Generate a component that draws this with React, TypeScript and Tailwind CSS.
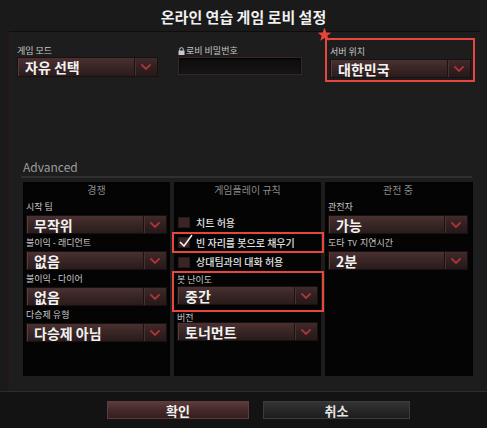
import type { ReactNode } from "react";

const FONT = '"Noto Sans CJK KR", "Noto Sans", "Liberation Sans", sans-serif';

function Chevron() {
  return (
    <svg width="10" height="6" viewBox="0 0 10 6" fill="none">
      <path d="M1 1l4 4 4-4" stroke="#a9343a" strokeWidth="1.8" strokeLinecap="round" />
    </svg>
  );
}

function Select({ value, h = "h-[19px]" }: { value: string; h?: string }) {
  return (
    <div
      className={`flex ${h} w-full items-stretch border border-[#1a1010] bg-[linear-gradient(to_bottom,#4a3131,#3a2626_45%,#2a1c1c)] shadow-[inset_1px_0_0_#5a3c3c]`}
    >
      <span className="flex flex-1 items-center truncate pl-[7px] text-[14px] font-bold leading-none text-[#f2f2f2]">
        {value}
      </span>
      <span className="flex w-[23px] items-center justify-center border-l border-[#1d1212] bg-[linear-gradient(to_bottom,#402a2a,#322020_50%,#261919)] shadow-[inset_1px_0_0_#4b3232]">
        <Chevron />
      </span>
    </div>
  );
}

function Label({ children, className = "h-[17px]" }: { children: ReactNode; className?: string }) {
  return (
    <div className={`flex items-center text-[9px] leading-none text-[#c8c8c8] ${className}`}>{children}</div>
  );
}

function Check({ label, checked }: { label: string; checked?: boolean }) {
  return (
    <div className="flex h-full items-center gap-[6px] pl-[4px]">
      <span className="relative h-[11px] w-[12px] border border-[#2a1818] bg-[#3a2424]">
        {checked && (
          <svg className="absolute -left-[1px] -top-[5px]" width="16" height="16" viewBox="0 0 16 16" fill="none">
            <path d="M2 9l4 4L14 2" stroke="#f2f2f2" strokeWidth="1.6" />
          </svg>
        )}
      </span>
      <span className="text-[10px] font-medium leading-none text-[#e0e0e0]">{label}</span>
    </div>
  );
}

function ColumnHeader({ children }: { children: ReactNode }) {
  return (
    <div className="flex h-[16px] items-center justify-center text-[10px] leading-none text-[#8a8a8a]">{children}</div>
  );
}

export default function App() {
  return (
    <div
      className="flex h-[428px] w-[487px] flex-col overflow-hidden bg-[#1a1a1a]"
      style={{ fontFamily: FONT }}
    >
      {/* title */}
      <div className="flex h-[31px] items-center justify-center pt-[3px] text-[15px] font-bold text-[#f0f0f0]">
        온라인 연습 게임 로비 설정
      </div>

      {/* main panel */}
      <div className="relative ml-[8px] mr-[7px] h-[360px] border-l border-[#2a1515] bg-[#1d1d1d] shadow-[inset_0_1px_0_#0e0e0e]">
        <svg className="absolute left-[308px] -top-[4px]" width="15" height="15" viewBox="0 0 20 20">
          <polygon points="10,1 12.4,7.3 19,7.6 13.8,11.8 15.6,18.3 10,14.6 4.4,18.3 6.2,11.8 1,7.6 7.6,7.3" fill="#e8453a" />
        </svg>

        {/* top row */}
        <div className="flex items-start pl-[8px] pt-[7px]">
          <div className="mt-[6px] w-[141px]">
            <Label className="h-[13px]">게임 모드</Label>
            <Select value="자유 선택" h="h-[20px]" />
          </div>
          <div className="ml-[20px] mt-[6px] w-[124px]">
            <Label className="h-[13px]">
              <svg width="7" height="8" viewBox="0 0 7 8" className="mr-[1px]">
                <rect x="0.5" y="3.5" width="6" height="4.5" fill="#c8c8c8" />
                <path d="M1.7 3.7V2.4a1.8 1.8 0 0 1 3.6 0v1.3" stroke="#c8c8c8" fill="none" />
              </svg>
              로비 비밀번호
            </Label>
            <div className="h-[18px] border border-[#3a2424] bg-[linear-gradient(to_bottom,#0c0c0c,#161616)] shadow-[inset_0_1px_2px_#000]" />
          </div>
          <div className="ml-[23px] w-[150px] border-2 border-[#e5473c] pb-[2px] pl-[3px] pr-[2px] pt-[4px]">
            <Label className="h-[15px]">서버 위치</Label>
            <Select value="대한민국" h="h-[19px]" />
          </div>
        </div>

        {/* advanced */}
        <div className="ml-[12px] mr-[8px] mt-[78px] border-b-2 border-[#303030] pb-[2px] pl-[2px] text-[12px] leading-[14px] text-[#9c9c9c]">
          Advanced
        </div>

        <div className="ml-[14px] mt-[4px] flex h-[194px] w-[450px] gap-[4px]">
          {/* competitive */}
          <div className="w-[147px] bg-[#040404] px-[3px]">
            <ColumnHeader>경쟁</ColumnHeader>
            <Label>시작 팀</Label>
            <Select value="무작위" />
            <Label>불이익 - 래디언트</Label>
            <Select value="없음" />
            <Label>불이익 - 다이어</Label>
            <Select value="없음" />
            <Label>다승제 유형</Label>
            <Select value="다승제 아님" />
          </div>

          {/* gameplay rules */}
          <div className="w-[147px] bg-[#040404]">
            <ColumnHeader>게임플레이 규칙</ColumnHeader>
            <div className="h-[15px]" />
            <div className="h-[19px]">
              <Check label="치트 허용" />
            </div>
            <div className="-ml-[2px] -mr-[3px] h-[21px] border-2 border-[#e5473c]">
              <Check label="빈 자리를 봇으로 채우기" checked />
            </div>
            <div className="h-[18px]">
              <Check label="상대팀과의 대화 허용" />
            </div>
            <div className="-ml-[2px] -mr-[3px] border-2 border-[#e5473c] pb-[5px] pl-[3px] pr-[4px]">
              <Label className="h-[13px]">봇 난이도</Label>
              <Select value="중간" />
            </div>
            <div className="px-[3px]">
              <Label className="h-[10px]">버전</Label>
              <Select value="토너먼트" />
            </div>
          </div>

          {/* spectating */}
          <div className="w-[148px] bg-[#040404] pl-[3px] pr-[5px]">
            <ColumnHeader>관전 중</ColumnHeader>
            <Label>관전자</Label>
            <Select value="가능" />
            <Label>
              도타 <span className="mx-[3px] text-[8px]">TV</span> 지연시간
            </Label>
            <Select value="2분" />
          </div>
        </div>
      </div>

      {/* footer */}
      <div className="flex flex-1 items-start gap-[14px] border-t border-[#2c2c2c] bg-[#131313] pl-[107px] pt-[9px]">
        <button className="flex h-[18px] w-[142px] items-center justify-center border border-[#5c3d3d] bg-[linear-gradient(to_bottom,#5c3a3a,#432828_55%,#341f1f)] text-[13px] font-bold leading-none text-[#f0f0f0]">
          확인
        </button>
        <button className="flex h-[18px] w-[147px] items-center justify-center border border-[#3c3c3c] bg-[linear-gradient(to_bottom,#343434,#262626_55%,#1d1d1d)] text-[13px] font-bold leading-none text-[#e6e6e6]">
          취소
        </button>
      </div>
    </div>
  );
}
